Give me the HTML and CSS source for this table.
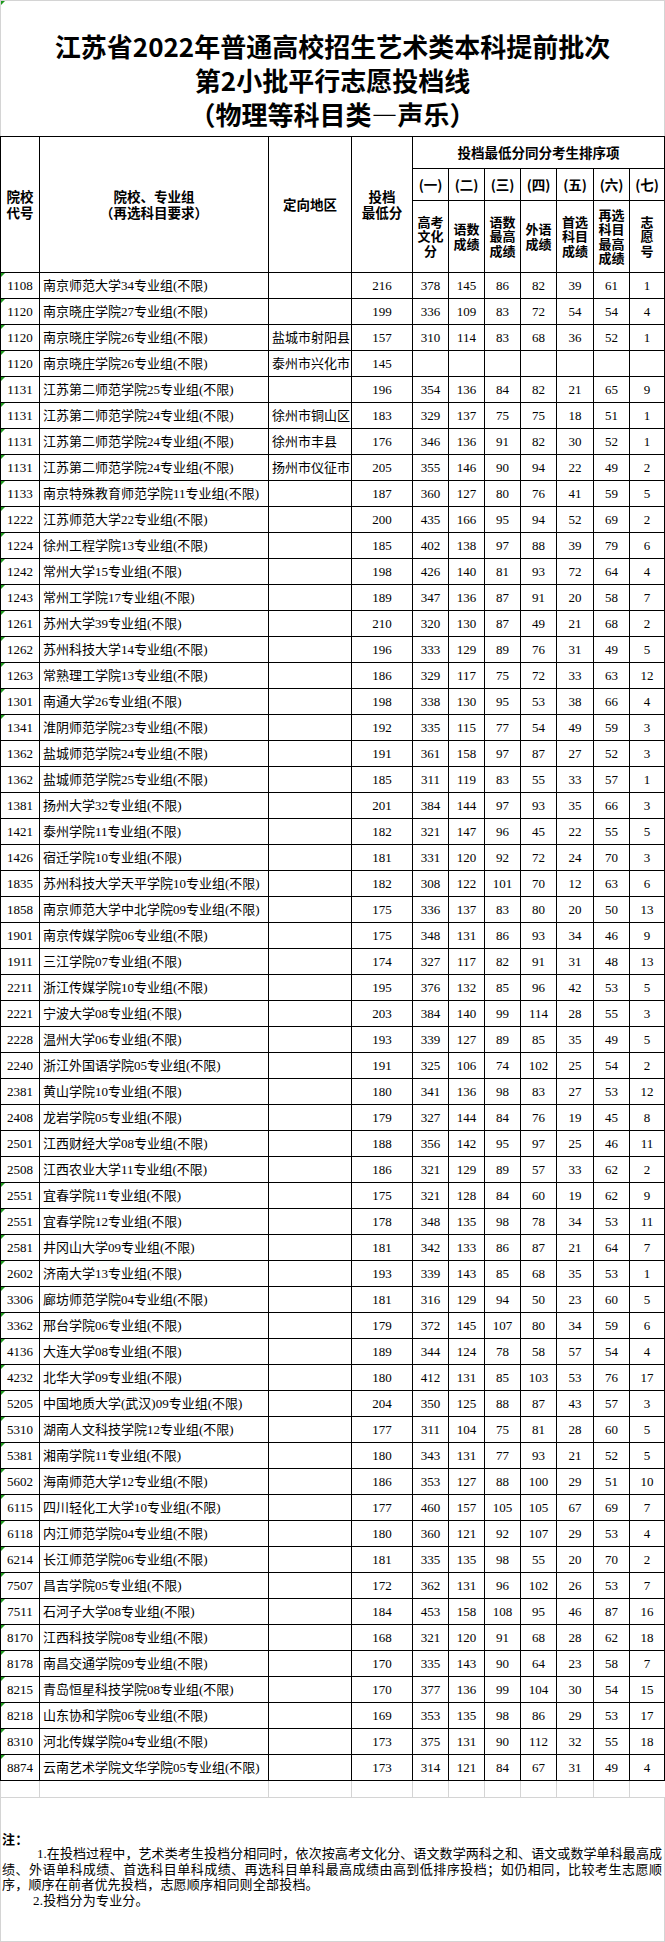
FILE: index.html
```html
<!DOCTYPE html>
<html lang="zh-CN">
<head>
<meta charset="utf-8">
<title>江苏省2022年普通高校招生艺术类本科提前批次第2小批平行志愿投档线</title>
<link rel="stylesheet" href="styles.css">
</head>
<body>
<div class="sheet">
  <div class="title">
    <span class="mark"></span>
    <div>江苏省2022年普通高校招生艺术类本科提前批次</div>
    <div>第2小批平行志愿投档线</div>
    <div>（物理等科目类—声乐）</div>
  </div>
  <table class="grid">
    <colgroup>
      <col class="w-code"><col class="w-name"><col class="w-area"><col class="w-min">
      <col class="w-s"><col class="w-s"><col class="w-s"><col class="w-s"><col class="w-s5"><col class="w-s"><col class="w-s7">
    </colgroup>
    <thead>
      <tr class="hA">
        <th rowspan="3" class="hl">院校<br>代号</th>
        <th rowspan="3" class="hl">院校、专业组<br>（再选科目要求）</th>
        <th rowspan="3" class="hl">定向地区</th>
        <th rowspan="3" class="hl">投档<br>最低分</th>
        <th colspan="7">投档最低分同分考生排序项</th>
      </tr>
      <tr class="hB">
        <th>(一)</th><th>(二)</th><th>(三)</th><th>(四)</th><th>(五)</th><th>(六)</th><th>(七)</th>
      </tr>
      <tr class="hC">
        <th>高考<br>文化<br>分</th>
        <th>语数<br>成绩</th>
        <th>语数<br>最高<br>成绩</th>
        <th>外语<br>成绩</th>
        <th>首选<br>科目<br>成绩</th>
        <th>再选<br>科目<br>最高<br>成绩</th>
        <th>志<br>愿<br>号</th>
      </tr>
    </thead>
    <tbody>
      <tr><td class="code g">1108</td><td class="name">南京师范大学34专业组(不限)</td><td class="area"></td><td>216</td><td>378</td><td>145</td><td>86</td><td>82</td><td>39</td><td>61</td><td>1</td></tr>
      <tr><td class="code g">1120</td><td class="name">南京晓庄学院27专业组(不限)</td><td class="area"></td><td>199</td><td>336</td><td>109</td><td>83</td><td>72</td><td>54</td><td>54</td><td>4</td></tr>
      <tr><td class="code g">1120</td><td class="name">南京晓庄学院26专业组(不限)</td><td class="area">盐城市射阳县</td><td>157</td><td>310</td><td>114</td><td>83</td><td>68</td><td>36</td><td>52</td><td>1</td></tr>
      <tr><td class="code g">1120</td><td class="name">南京晓庄学院26专业组(不限)</td><td class="area">泰州市兴化市</td><td>145</td><td></td><td></td><td></td><td></td><td></td><td></td><td></td></tr>
      <tr><td class="code g">1131</td><td class="name">江苏第二师范学院25专业组(不限)</td><td class="area"></td><td>196</td><td>354</td><td>136</td><td>84</td><td>82</td><td>21</td><td>65</td><td>9</td></tr>
      <tr><td class="code g">1131</td><td class="name">江苏第二师范学院24专业组(不限)</td><td class="area">徐州市铜山区</td><td>183</td><td>329</td><td>137</td><td>75</td><td>75</td><td>18</td><td>51</td><td>1</td></tr>
      <tr><td class="code g">1131</td><td class="name">江苏第二师范学院24专业组(不限)</td><td class="area">徐州市丰县</td><td>176</td><td>346</td><td>136</td><td>91</td><td>82</td><td>30</td><td>52</td><td>1</td></tr>
      <tr><td class="code g">1131</td><td class="name">江苏第二师范学院24专业组(不限)</td><td class="area">扬州市仪征市</td><td>205</td><td>355</td><td>146</td><td>90</td><td>94</td><td>22</td><td>49</td><td>2</td></tr>
      <tr><td class="code g">1133</td><td class="name">南京特殊教育师范学院11专业组(不限)</td><td class="area"></td><td>187</td><td>360</td><td>127</td><td>80</td><td>76</td><td>41</td><td>59</td><td>5</td></tr>
      <tr><td class="code g">1222</td><td class="name">江苏师范大学22专业组(不限)</td><td class="area"></td><td>200</td><td>435</td><td>166</td><td>95</td><td>94</td><td>52</td><td>69</td><td>2</td></tr>
      <tr><td class="code g">1224</td><td class="name">徐州工程学院13专业组(不限)</td><td class="area"></td><td>185</td><td>402</td><td>138</td><td>97</td><td>88</td><td>39</td><td>79</td><td>6</td></tr>
      <tr><td class="code g">1242</td><td class="name">常州大学15专业组(不限)</td><td class="area"></td><td>198</td><td>426</td><td>140</td><td>81</td><td>93</td><td>72</td><td>64</td><td>4</td></tr>
      <tr><td class="code g">1243</td><td class="name">常州工学院17专业组(不限)</td><td class="area"></td><td>189</td><td>347</td><td>136</td><td>87</td><td>91</td><td>20</td><td>58</td><td>7</td></tr>
      <tr><td class="code g">1261</td><td class="name">苏州大学39专业组(不限)</td><td class="area"></td><td>210</td><td>320</td><td>130</td><td>87</td><td>49</td><td>21</td><td>68</td><td>2</td></tr>
      <tr><td class="code g">1262</td><td class="name">苏州科技大学14专业组(不限)</td><td class="area"></td><td>196</td><td>333</td><td>129</td><td>89</td><td>76</td><td>31</td><td>49</td><td>5</td></tr>
      <tr><td class="code g">1263</td><td class="name">常熟理工学院13专业组(不限)</td><td class="area"></td><td>186</td><td>329</td><td>117</td><td>75</td><td>72</td><td>33</td><td>63</td><td>12</td></tr>
      <tr><td class="code g">1301</td><td class="name">南通大学26专业组(不限)</td><td class="area"></td><td>198</td><td>338</td><td>130</td><td>95</td><td>53</td><td>38</td><td>66</td><td>4</td></tr>
      <tr><td class="code g">1341</td><td class="name">淮阴师范学院23专业组(不限)</td><td class="area"></td><td>192</td><td>335</td><td>115</td><td>77</td><td>54</td><td>49</td><td>59</td><td>3</td></tr>
      <tr><td class="code">1362</td><td class="name">盐城师范学院24专业组(不限)</td><td class="area"></td><td>191</td><td>361</td><td>158</td><td>97</td><td>87</td><td>27</td><td>52</td><td>3</td></tr>
      <tr><td class="code">1362</td><td class="name">盐城师范学院25专业组(不限)</td><td class="area"></td><td>185</td><td>311</td><td>119</td><td>83</td><td>55</td><td>33</td><td>57</td><td>1</td></tr>
      <tr><td class="code">1381</td><td class="name">扬州大学32专业组(不限)</td><td class="area"></td><td>201</td><td>384</td><td>144</td><td>97</td><td>93</td><td>35</td><td>66</td><td>3</td></tr>
      <tr><td class="code">1421</td><td class="name">泰州学院11专业组(不限)</td><td class="area"></td><td>182</td><td>321</td><td>147</td><td>96</td><td>45</td><td>22</td><td>55</td><td>5</td></tr>
      <tr><td class="code">1426</td><td class="name">宿迁学院10专业组(不限)</td><td class="area"></td><td>181</td><td>331</td><td>120</td><td>92</td><td>72</td><td>24</td><td>70</td><td>3</td></tr>
      <tr><td class="code">1835</td><td class="name">苏州科技大学天平学院10专业组(不限)</td><td class="area"></td><td>182</td><td>308</td><td>122</td><td>101</td><td>70</td><td>12</td><td>63</td><td>6</td></tr>
      <tr><td class="code">1858</td><td class="name">南京师范大学中北学院09专业组(不限)</td><td class="area"></td><td>175</td><td>336</td><td>137</td><td>83</td><td>80</td><td>20</td><td>50</td><td>13</td></tr>
      <tr><td class="code">1901</td><td class="name">南京传媒学院06专业组(不限)</td><td class="area"></td><td>175</td><td>348</td><td>131</td><td>86</td><td>93</td><td>34</td><td>46</td><td>9</td></tr>
      <tr><td class="code">1911</td><td class="name">三江学院07专业组(不限)</td><td class="area"></td><td>174</td><td>327</td><td>117</td><td>82</td><td>91</td><td>31</td><td>48</td><td>13</td></tr>
      <tr><td class="code">2211</td><td class="name">浙江传媒学院10专业组(不限)</td><td class="area"></td><td>195</td><td>376</td><td>132</td><td>85</td><td>96</td><td>42</td><td>53</td><td>5</td></tr>
      <tr><td class="code">2221</td><td class="name">宁波大学08专业组(不限)</td><td class="area"></td><td>203</td><td>384</td><td>140</td><td>99</td><td>114</td><td>28</td><td>55</td><td>3</td></tr>
      <tr><td class="code">2228</td><td class="name">温州大学06专业组(不限)</td><td class="area"></td><td>193</td><td>339</td><td>127</td><td>89</td><td>85</td><td>35</td><td>49</td><td>5</td></tr>
      <tr><td class="code">2240</td><td class="name">浙江外国语学院05专业组(不限)</td><td class="area"></td><td>191</td><td>325</td><td>106</td><td>74</td><td>102</td><td>25</td><td>54</td><td>2</td></tr>
      <tr><td class="code">2381</td><td class="name">黄山学院10专业组(不限)</td><td class="area"></td><td>180</td><td>341</td><td>136</td><td>98</td><td>83</td><td>27</td><td>53</td><td>12</td></tr>
      <tr><td class="code">2408</td><td class="name">龙岩学院05专业组(不限)</td><td class="area"></td><td>179</td><td>327</td><td>144</td><td>84</td><td>76</td><td>19</td><td>45</td><td>8</td></tr>
      <tr><td class="code">2501</td><td class="name">江西财经大学08专业组(不限)</td><td class="area"></td><td>188</td><td>356</td><td>142</td><td>95</td><td>97</td><td>25</td><td>46</td><td>11</td></tr>
      <tr><td class="code">2508</td><td class="name">江西农业大学11专业组(不限)</td><td class="area"></td><td>186</td><td>321</td><td>129</td><td>89</td><td>57</td><td>33</td><td>62</td><td>2</td></tr>
      <tr><td class="code g">2551</td><td class="name">宜春学院11专业组(不限)</td><td class="area"></td><td>175</td><td>321</td><td>128</td><td>84</td><td>60</td><td>19</td><td>62</td><td>9</td></tr>
      <tr><td class="code g">2551</td><td class="name">宜春学院12专业组(不限)</td><td class="area"></td><td>178</td><td>348</td><td>135</td><td>98</td><td>78</td><td>34</td><td>53</td><td>11</td></tr>
      <tr><td class="code g">2581</td><td class="name">井冈山大学09专业组(不限)</td><td class="area"></td><td>181</td><td>342</td><td>133</td><td>86</td><td>87</td><td>21</td><td>64</td><td>7</td></tr>
      <tr><td class="code g">2602</td><td class="name">济南大学13专业组(不限)</td><td class="area"></td><td>193</td><td>339</td><td>143</td><td>85</td><td>68</td><td>35</td><td>53</td><td>1</td></tr>
      <tr><td class="code g">3306</td><td class="name">廊坊师范学院04专业组(不限)</td><td class="area"></td><td>181</td><td>316</td><td>129</td><td>94</td><td>50</td><td>23</td><td>60</td><td>5</td></tr>
      <tr><td class="code g">3362</td><td class="name">邢台学院06专业组(不限)</td><td class="area"></td><td>179</td><td>372</td><td>145</td><td>107</td><td>80</td><td>34</td><td>59</td><td>6</td></tr>
      <tr><td class="code g">4136</td><td class="name">大连大学08专业组(不限)</td><td class="area"></td><td>189</td><td>344</td><td>124</td><td>78</td><td>58</td><td>57</td><td>54</td><td>4</td></tr>
      <tr><td class="code g">4232</td><td class="name">北华大学09专业组(不限)</td><td class="area"></td><td>180</td><td>412</td><td>131</td><td>85</td><td>103</td><td>53</td><td>76</td><td>17</td></tr>
      <tr><td class="code g">5205</td><td class="name">中国地质大学(武汉)09专业组(不限)</td><td class="area"></td><td>204</td><td>350</td><td>125</td><td>88</td><td>87</td><td>43</td><td>57</td><td>3</td></tr>
      <tr><td class="code g">5310</td><td class="name">湖南人文科技学院12专业组(不限)</td><td class="area"></td><td>177</td><td>311</td><td>104</td><td>75</td><td>81</td><td>28</td><td>60</td><td>5</td></tr>
      <tr><td class="code g">5381</td><td class="name">湘南学院11专业组(不限)</td><td class="area"></td><td>180</td><td>343</td><td>131</td><td>77</td><td>93</td><td>21</td><td>52</td><td>5</td></tr>
      <tr><td class="code g">5602</td><td class="name">海南师范大学12专业组(不限)</td><td class="area"></td><td>186</td><td>353</td><td>127</td><td>88</td><td>100</td><td>29</td><td>51</td><td>10</td></tr>
      <tr><td class="code g">6115</td><td class="name">四川轻化工大学10专业组(不限)</td><td class="area"></td><td>177</td><td>460</td><td>157</td><td>105</td><td>105</td><td>67</td><td>69</td><td>7</td></tr>
      <tr><td class="code g">6118</td><td class="name">内江师范学院04专业组(不限)</td><td class="area"></td><td>180</td><td>360</td><td>121</td><td>92</td><td>107</td><td>29</td><td>53</td><td>4</td></tr>
      <tr><td class="code g">6214</td><td class="name">长江师范学院06专业组(不限)</td><td class="area"></td><td>181</td><td>335</td><td>135</td><td>98</td><td>55</td><td>20</td><td>70</td><td>2</td></tr>
      <tr><td class="code g">7507</td><td class="name">昌吉学院05专业组(不限)</td><td class="area"></td><td>172</td><td>362</td><td>131</td><td>96</td><td>102</td><td>26</td><td>53</td><td>7</td></tr>
      <tr><td class="code g">7511</td><td class="name">石河子大学08专业组(不限)</td><td class="area"></td><td>184</td><td>453</td><td>158</td><td>108</td><td>95</td><td>46</td><td>87</td><td>16</td></tr>
      <tr><td class="code g">8170</td><td class="name">江西科技学院08专业组(不限)</td><td class="area"></td><td>168</td><td>321</td><td>120</td><td>91</td><td>68</td><td>28</td><td>62</td><td>18</td></tr>
      <tr><td class="code g">8178</td><td class="name">南昌交通学院09专业组(不限)</td><td class="area"></td><td>170</td><td>335</td><td>143</td><td>90</td><td>64</td><td>23</td><td>58</td><td>7</td></tr>
      <tr><td class="code g">8215</td><td class="name">青岛恒星科技学院08专业组(不限)</td><td class="area"></td><td>170</td><td>377</td><td>136</td><td>99</td><td>104</td><td>30</td><td>54</td><td>15</td></tr>
      <tr><td class="code g">8218</td><td class="name">山东协和学院06专业组(不限)</td><td class="area"></td><td>169</td><td>353</td><td>135</td><td>98</td><td>86</td><td>29</td><td>53</td><td>17</td></tr>
      <tr><td class="code g">8310</td><td class="name">河北传媒学院04专业组(不限)</td><td class="area"></td><td>173</td><td>375</td><td>131</td><td>90</td><td>112</td><td>32</td><td>55</td><td>18</td></tr>
      <tr><td class="code g">8874</td><td class="name">云南艺术学院文华学院05专业组(不限)</td><td class="area"></td><td>173</td><td>314</td><td>121</td><td>84</td><td>67</td><td>31</td><td>49</td><td>4</td></tr>
    </tbody>
  </table>
  <div class="tail">
    <span></span><span></span><span></span><span></span><span></span><span></span><span></span><span></span><span></span><span></span><span></span>
  </div>
  <div class="notes">
    <div class="note-h">注：</div>
    <div class="nl j first">1.在投档过程中，艺术类考生投档分相同时，依次按高考文化分、语文数学两科之和、语文或数学单科最高成</div>
    <div class="nl j">绩、外语单科成绩、首选科目单科成绩、再选科目单科最高成绩由高到低排序投档；如仍相同，比较考生志愿顺</div>
    <div class="nl">序，顺序在前者优先投档，志愿顺序相同则全部投档。</div>
    <div class="nl second">2.投档分为专业分。</div>
  </div>
</div>
</body>
</html>
```

FILE: styles.css
```css
html, body {
  margin: 0;
  padding: 0;
  background: #ffffff;
}

.sheet {
  width: 665px;
  color: #000;
}

/* ---------- title ---------- */
.title {
  position: relative;
  height: 136px;
  box-sizing: border-box;
  border: 1px solid #d4d4d4;
  border-bottom: none;
  padding-top: 28px;
  display: flex;
  flex-direction: column;
  align-items: center;
  font-family: "Noto Sans CJK SC", sans-serif;
  font-weight: 700;
  font-size: 26px;
  line-height: 34px;
}

.mark {
  position: absolute;
  left: 0;
  top: 0;
  width: 0;
  height: 0;
  border-top: 4px solid #1e9a1e;
  border-right: 4px solid transparent;
}

/* ---------- table ---------- */
.grid {
  width: 665px;
  table-layout: fixed;
  border-collapse: collapse;
  font-family: "Liberation Serif", "Noto Sans CJK SC", serif;
  font-size: 13px;
}

.w-code { width: 39px; }
.w-name { width: 229px; }
.w-area { width: 83px; }
.w-min  { width: 61px; }
.w-s    { width: 36px; }
.w-s5   { width: 37px; }
.w-s7   { width: 35px; }

.grid th,
.grid td {
  border: 1px solid #000;
  padding: 0;
  text-align: center;
  vertical-align: middle;
  white-space: nowrap;
  overflow: hidden;
}

.grid th {
  font-family: "Noto Sans CJK SC", sans-serif;
  font-weight: 700;
  font-size: 13.5px;
  line-height: 15.5px;
}

.hA { height: 32px; }
.hB { height: 32px; }
.hC { height: 72px; }
.hC th {
  font-size: 13px;
  line-height: 14.5px;
}

.grid tbody tr { height: 26px; }
.grid td { line-height: 16px; }

.grid td.code {
  position: relative;
}

.grid td.g::before {
  content: "";
  position: absolute;
  left: 0;
  top: 0;
  width: 0;
  height: 0;
  border-top: 4px solid #1e9a1e;
  border-right: 4px solid transparent;
}

.grid td.name,
.grid td.area {
  text-align: left;
  padding-left: 3px;
}

/* ---------- trailing grid row ---------- */
.tail {
  display: grid;
  grid-template-columns: 39px 229px 83px 61px 36px 36px 36px 36px 37px 36px 36px;
  height: 17px;
  border-left: 1px solid #d4d4d4;
  box-sizing: border-box;
}

.tail span {
  border-right: 1px solid #d4d4d4;
  border-bottom: 1px solid #d4d4d4;
}

/* ---------- notes ---------- */
.notes {
  height: 144px;
  box-sizing: border-box;
  border: 1px solid #d4d4d4;
  border-top: none;
  display: flex;
  flex-direction: column;
  justify-content: center;
  padding: 0 2px 0 1px;
  font-family: "Liberation Serif", "Noto Sans CJK SC", serif;
  font-size: 13px;
  line-height: 15.5px;
  letter-spacing: 0.2px;
}

.note-h {
  font-family: "Noto Sans CJK SC", sans-serif;
  font-weight: 700;
}

.nl {
  white-space: nowrap;
}

.nl.j {
  text-align: justify;
  text-align-last: justify;
  letter-spacing: 0;
}

.nl.first {
  padding-left: 35px;
}

.nl.second {
  padding-left: 31px;
}
```
